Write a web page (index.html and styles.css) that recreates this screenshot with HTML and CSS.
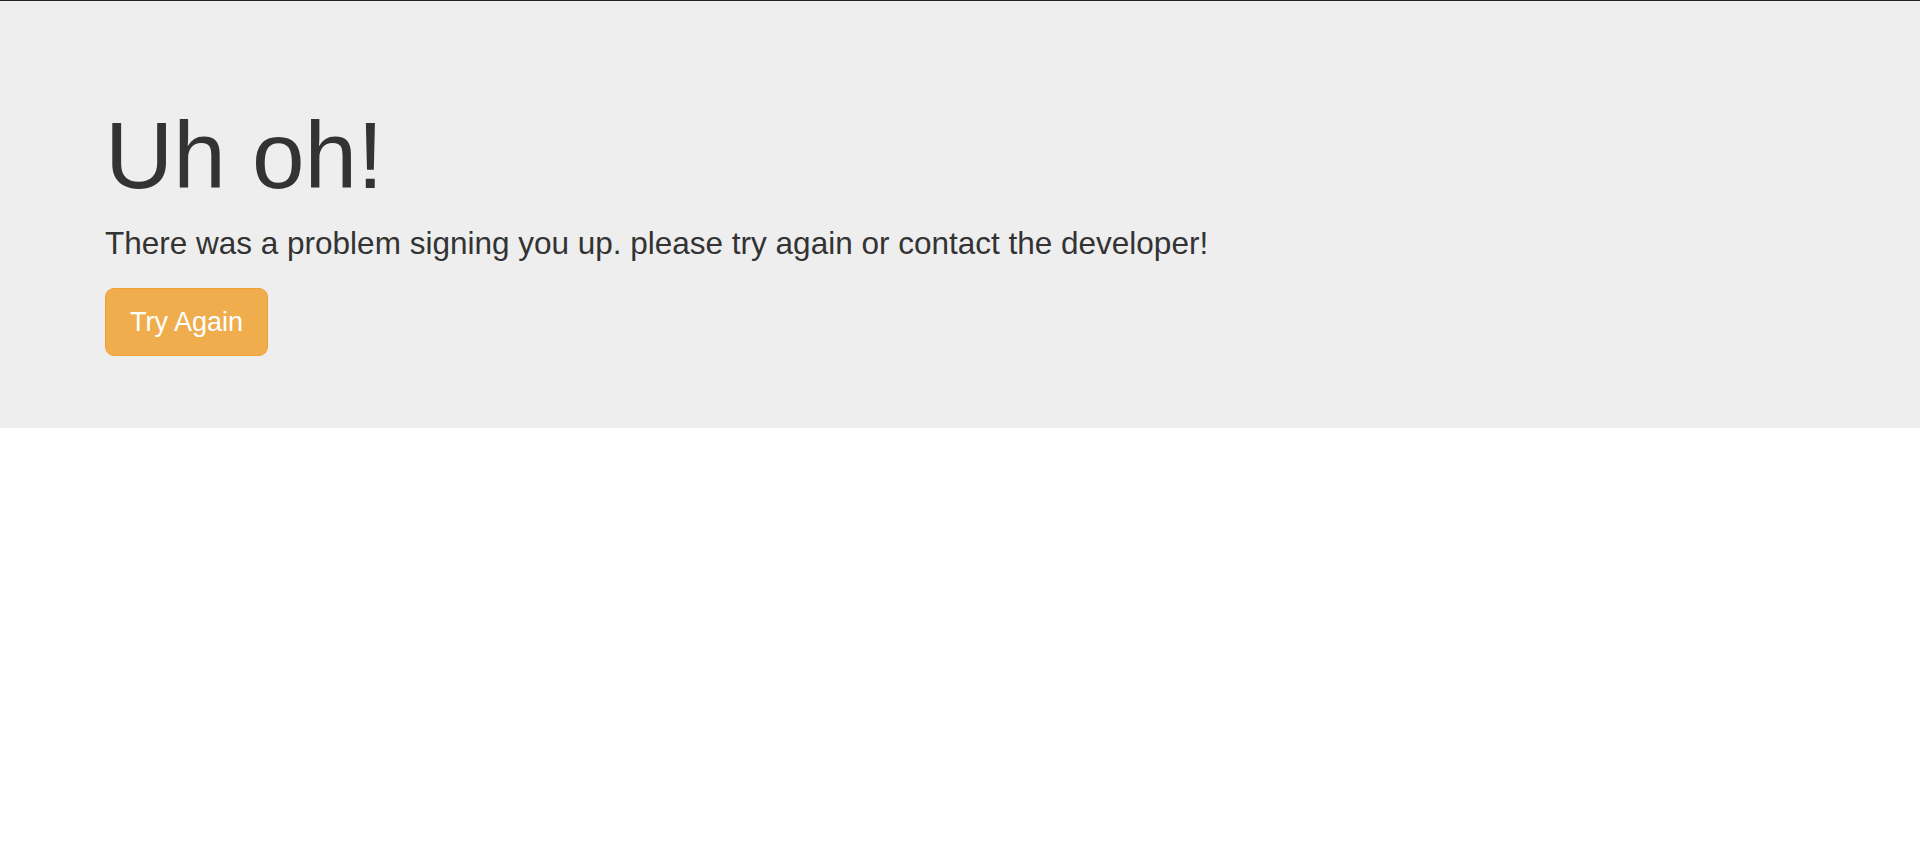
FILE: index.html
```html
<!DOCTYPE html>
<html lang="en">
<head>
<meta charset="utf-8">
<title>Uh oh!</title>
<link rel="stylesheet" href="styles.css">
</head>
<body>
<div class="topline"></div>
<div class="jumbotron">
  <div class="container">
    <h1>Uh oh!</h1>
    <p>There was a problem signing you up. please try again or contact the developer!</p>
    <a class="btn" href="#">Try Again</a>
  </div>
</div>
</body>
</html>
```

FILE: styles.css
```css
html, body {
  margin: 0;
  padding: 0;
  background: #fff;
}
body {
  font-family: "Liberation Sans", Arial, Helvetica, sans-serif;
  color: #333;
}
.topline {
  height: 1px;
  background: #222;
}
.jumbotron {
  background: #eee;
  padding: 72px 0 72px;
}
.container {
  padding: 0 105px;
}
.jumbotron h1 {
  margin: 30px 0 14px;
  font-size: 94.5px;
  line-height: 104px;
  font-weight: 500;
  color: #333;
}
.jumbotron p {
  margin: 0 0 22px;
  font-size: 31.5px;
  line-height: 45px;
  font-weight: 200;
}
.btn {
  display: inline-block;
  padding: 15px 24px;
  font-size: 27px;
  line-height: 36px;
  color: #fff;
  background: #f0ad4e;
  border: 1px solid #eea236;
  border-radius: 9px;
  text-decoration: none;
  vertical-align: top;
}
```
